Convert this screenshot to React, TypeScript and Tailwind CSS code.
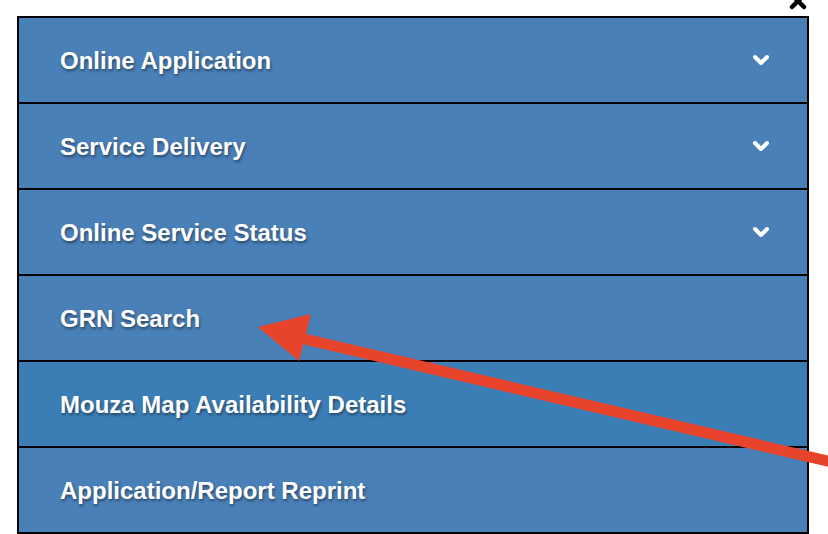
import { useState } from "react";

interface MenuItem {
  label: string;
  hasSub?: boolean;
}

const items: MenuItem[] = [
  { label: "Online Application", hasSub: true },
  { label: "Service Delivery", hasSub: true },
  { label: "Online Service Status", hasSub: true },
  { label: "GRN Search" },
  { label: "Mouza Map Availability Details" },
  { label: "Application/Report Reprint" },
];

function Chevron() {
  return (
    <svg width="18" height="14" viewBox="0 0 18 14" aria-hidden="true">
      <path
        d="M3 4 L9 10 L15 4"
        fill="none"
        stroke="white"
        strokeWidth="4"
        strokeLinecap="round"
        strokeLinejoin="round"
      />
    </svg>
  );
}

export default function App() {
  // hovered row is a touch darker, like the screenshot
  const [hover] = useState(4);

  return (
    <div
      className="relative w-[828px] h-[534px] overflow-hidden bg-white"
      style={{ fontFamily: '"Liberation Sans", Arial, sans-serif' }}
    >
      {/* close icon, mostly cut off at the top */}
      <svg
        className="absolute left-[788px] top-[-9px]"
        width="20"
        height="20"
        viewBox="0 0 20 20"
        aria-hidden="true"
      >
        <path d="M4 4 L16 16 M16 4 L4 16" stroke="black" strokeWidth="4.5" strokeLinecap="round" />
      </svg>

      <div className="pt-4 pl-[17px]">
        <ul className="w-[792px] border-2 border-black">
          {items.map((item, i) => {
            const last = i === items.length - 1;
            return (
              <li
                key={item.label}
                className={`flex items-center justify-between pl-[41px] pr-[37px] ${
                  last ? "h-[84px]" : "h-[86px] border-b-2 border-black"
                } ${i === hover ? "bg-[#3b7eb6]" : "bg-[#4a80b8]"}`}
              >
                <span className="pt-[2px] text-[24px] font-bold text-white [text-shadow:1px_2px_3px_rgba(0,0,0,0.45)]">
                  {item.label}
                </span>
                {item.hasSub && <Chevron />}
              </li>
            );
          })}
        </ul>
      </div>

      {/* red annotation arrow */}
      <svg
        className="absolute left-0 top-0 pointer-events-none"
        width="828"
        height="534"
        viewBox="0 0 828 534"
        aria-hidden="true"
      >
        <line x1="300" y1="338" x2="840" y2="464" stroke="#e8442b" strokeWidth="11" />
        <polygon points="258,327 311,314 299,361" fill="#e8442b" />
      </svg>
    </div>
  );
}
